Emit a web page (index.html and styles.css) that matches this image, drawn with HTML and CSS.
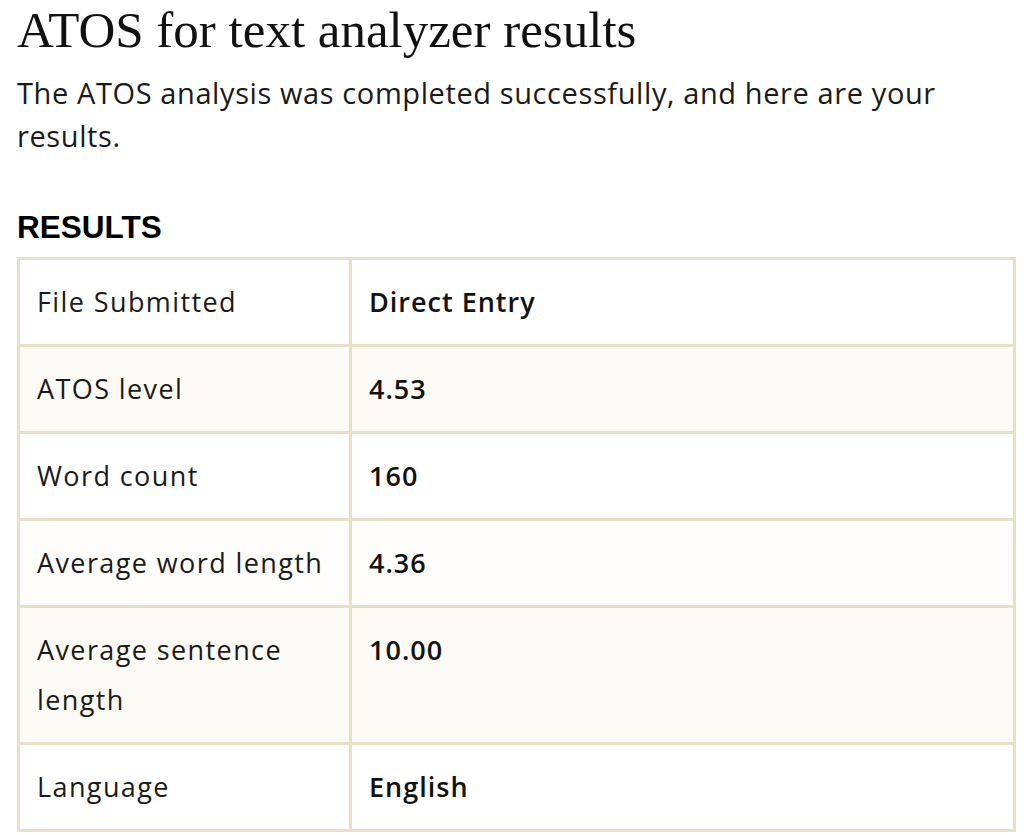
FILE: index.html
```html
<!DOCTYPE html>
<html lang="en">
<head>
<meta charset="utf-8">
<title>ATOS for text analyzer results</title>
<link rel="stylesheet" href="styles.css">
</head>
<body>
<main class="page">
  <h1 class="title">ATOS for text analyzer results</h1>
  <p class="intro">The ATOS analysis was completed successfully, and here are your results.</p>
  <h2 class="section">RESULTS</h2>
  <table class="results">
    <tbody>
      <tr><th>File Submitted</th><td>Direct Entry</td></tr>
      <tr class="shaded"><th>ATOS level</th><td>4.53</td></tr>
      <tr><th>Word count</th><td>160</td></tr>
      <tr class="faint"><th>Average word length</th><td>4.36</td></tr>
      <tr class="shaded"><th>Average sentence length</th><td>10.00</td></tr>
      <tr><th>Language</th><td>English</td></tr>
    </tbody>
  </table>
</main>
</body>
</html>
```

FILE: styles.css
```css
html, body {
  margin: 0;
  padding: 0;
  background: #ffffff;
}
.page {
  padding: 0 8px 0 17px;
  color: #111111;
}
.title {
  font-family: "Liberation Serif", serif;
  font-weight: normal;
  font-size: 51px;
  line-height: 60px;
  margin: 0;
  color: #111;
}
.intro {
  font-family: "Open Sans", sans-serif;
  font-size: 29px;
  letter-spacing: 0.6px;
  line-height: 43px;
  margin: 11px 0 0 0;
  color: #1a1a1a;
}
.section {
  font-family: "Liberation Sans", sans-serif;
  font-weight: bold;
  font-size: 31.5px;
  line-height: 36px;
  margin: 52px 0 12px 0;
  color: #000;
}
.results {
  border-collapse: collapse;
  width: 999px;
  font-family: "Open Sans", sans-serif;
  font-size: 27px;
  line-height: 50px;
}
.results th, .results td {
  border: 3px solid #e6e0c6;
  padding: 17px 18px 17px 17px;
  text-align: left;
  vertical-align: top;
}
.results th {
  font-weight: normal;
  letter-spacing: 1.4px;
  width: 294px;
  color: #1a1a1a;
}
.results td {
  font-weight: 600;
  letter-spacing: 1px;
  color: #111;
}
.results .shaded {
  background: #fcfaf4;
}
.results .faint {
  background: #fefdfb;
}
```
